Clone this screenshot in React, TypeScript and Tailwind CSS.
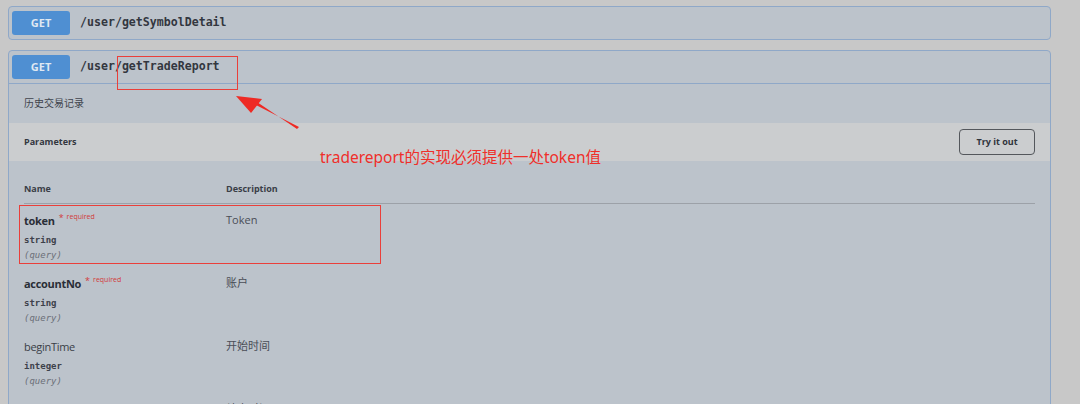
import React from "react";

const sans = { fontFamily: '"Open Sans", "Noto Sans CJK SC", sans-serif' };
const mono = { fontFamily: '"DejaVu Sans Mono", monospace' };

function Badge() {
  return (
    <div className="w-[58px] h-[24px] rounded-[3px] bg-[#4f8fd2] flex items-center justify-center text-[11px] font-bold text-[#dfe8f2]" style={sans}>
      GET
    </div>
  );
}

function Param({ name, type, desc, required }: { name: string; type: string; desc: string; required?: boolean }) {
  return (
    <div className="flex h-[63px]">
      <div className="w-[202px] flex flex-col">
        <div className="flex items-start h-[20px]">
          <span className={`text-[11px] leading-[20px] tracking-[-0.3px] ${required ? "font-bold text-[#2a2e37]" : "text-[#3a3e47]"}`} style={sans}>
            {name}
          </span>
          {required && (
            <span className="ml-[4px] mt-[1px] text-[7px] leading-[10px] text-[#d23a3a] flex items-start" style={sans}>
              <span className="text-[9px] leading-[9px] mr-[3px] mt-[1px]">*</span>required
            </span>
          )}
        </div>
        <div className="text-[9px] leading-[16px] font-bold text-[#3d414a] mt-[1px]" style={mono}>
          {type}
        </div>
        <div className="text-[9px] leading-[15px] italic text-[#6b6f78]" style={mono}>
          (query)
        </div>
      </div>
      <div className="text-[11px] leading-[18px] text-[#4a4e57]" style={sans}>
        {desc}
      </div>
    </div>
  );
}

export default function App() {
  return (
    <div className="relative w-[1080px] h-[404px] overflow-hidden bg-[#c8c8c8]" style={sans}>
      <div className="pt-[6px] pl-[8px] w-[1051px]">
        {/* Block 1 */}
        <div className="h-[34px] border border-[#8fa8c8] rounded-[4px] bg-[#bcc3cb] flex items-center pl-[3px]">
          <Badge />
          <span className="ml-[10px] text-[11.6px] font-bold text-[#33373f]" style={mono}>
            /user/getSymbolDetail
          </span>
        </div>

        {/* Block 2 */}
        <div className="mt-[10px] h-[400px] border border-[#8fa8c8] rounded-t-[4px] bg-[#bcc3cb]">
          <div className="h-[33px] border-b border-[#8fa8c8] flex items-center pl-[3px]">
            <Badge />
            <span className="ml-[10px] text-[11.6px] font-bold text-[#33373f]" style={mono}>
              /user/getTradeReport
            </span>
          </div>
          <div className="h-[39px] flex items-center pl-[15px] text-[10px] text-[#40444d]" style={sans}>
            历史交易记录
          </div>
          <div className="h-[38px] bg-[#cbcdcf] flex items-center justify-between pl-[15px] pr-[15px]">
            <span className="text-[9px] font-bold text-[#33373f]">Parameters</span>
            <div className="w-[76px] h-[26px] border-[1.5px] border-[#54575c] rounded-[4px] flex items-center justify-center text-[9px] font-bold text-[#30343c]">
              Try it out
            </div>
          </div>
          <div className="px-[15px] pt-[21px]">
            <div className="flex h-[22px] border-b border-[#9ca1a8] items-start">
              <div className="w-[202px] text-[9px] font-bold text-[#3a3e47]">Name</div>
              <div className="text-[9px] font-bold text-[#3a3e47]">Description</div>
            </div>
            <div className="pt-[7px]">
              <Param name="token" type="string" desc="Token" required />
              <Param name="accountNo" type="string" desc="账户" required />
              <Param name="beginTime" type="integer" desc="开始时间" />
              <Param name="endTime" type="integer" desc="结束时间" />
            </div>
          </div>
        </div>
      </div>

      {/* Annotations */}
      <div className="absolute left-[117px] top-[56px] w-[121px] h-[34px] border border-[#ea3f3a]" />
      <div className="absolute left-[19px] top-[205px] w-[362px] h-[59px] border border-[#ea3f3a]" />
      <svg className="absolute left-0 top-0" width="1080" height="404">
        <polygon points="297,129 299,127 252,103 254,100" fill="#ee2a24" />
        <polygon points="236,96 262,99 251,113" fill="#ee2a24" />
      </svg>
      <div className="absolute left-[320px] top-[146px] text-[15.5px] leading-[22px] text-[#ef2f2a] whitespace-nowrap" style={{ fontFamily: '"Noto Sans", "Noto Sans CJK SC", sans-serif' }}>
        tradereport的实现必须提供一处token值
      </div>
    </div>
  );
}
